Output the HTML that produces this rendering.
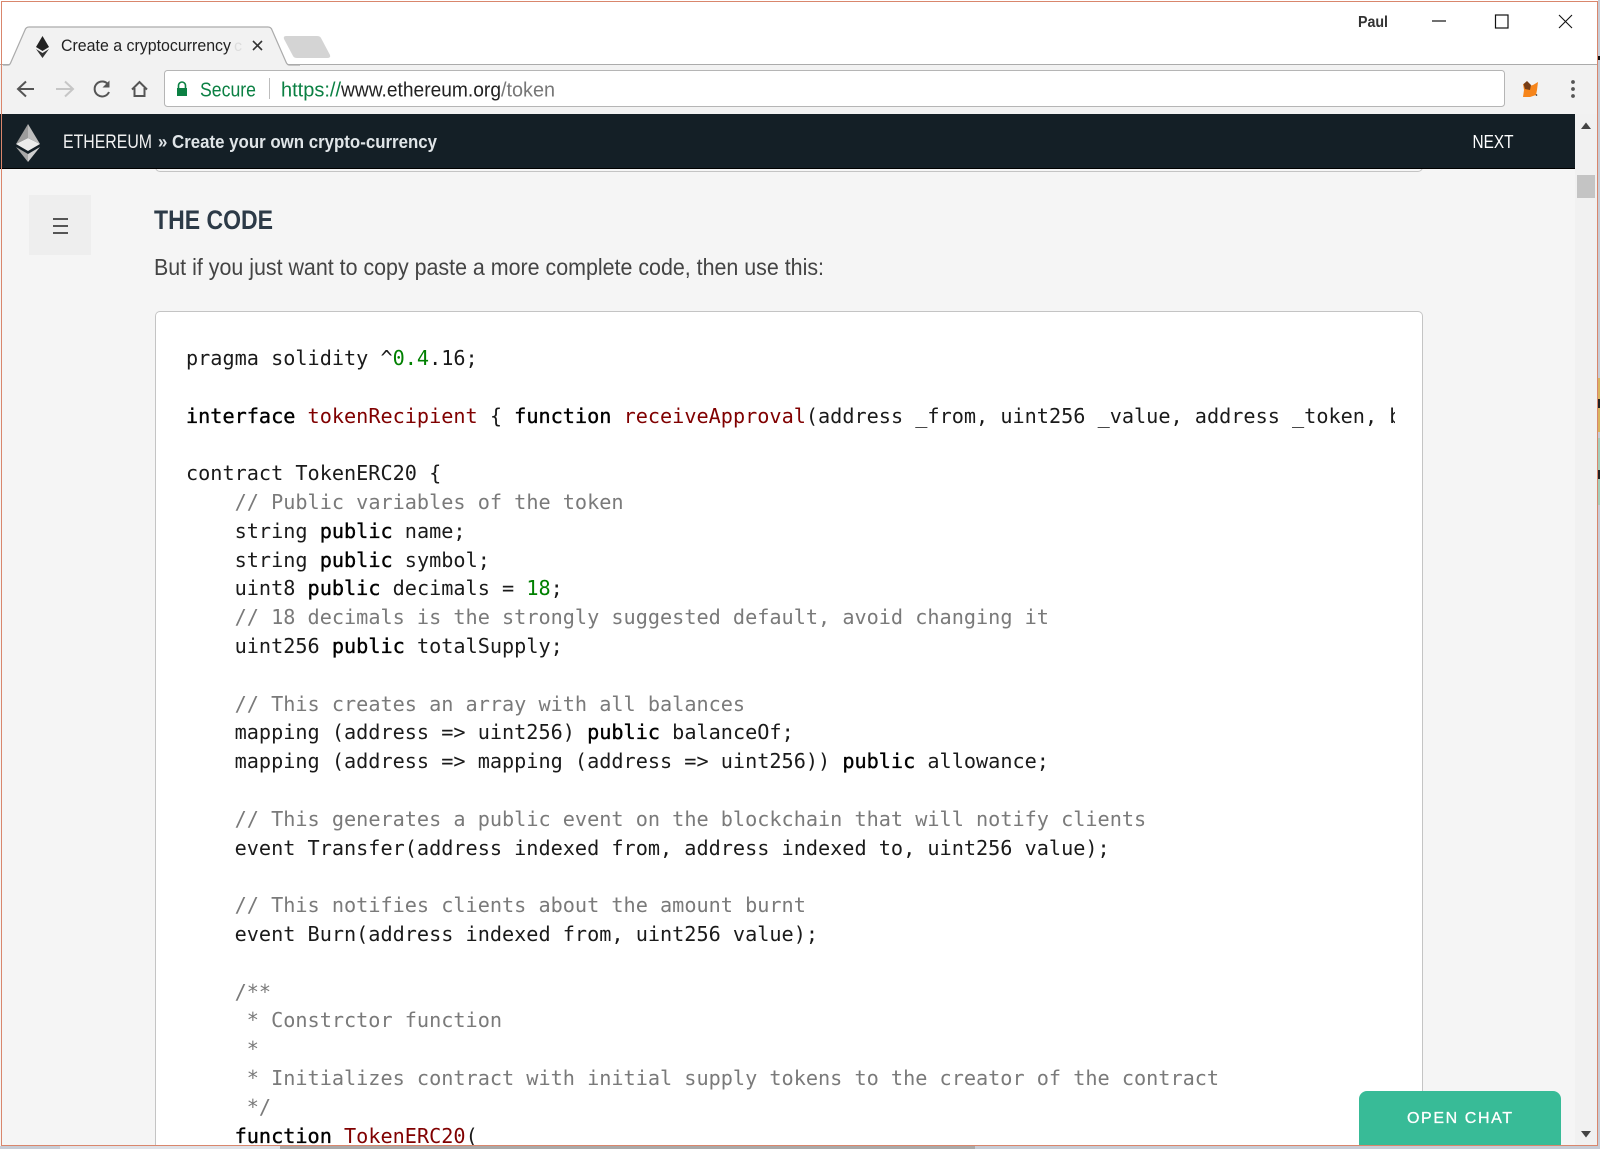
<!DOCTYPE html>
<html><head><meta charset="utf-8"><title>Create a cryptocurrency</title>
<style>
html,body{margin:0;padding:0;width:1600px;height:1149px;overflow:hidden;background:#c6ccd6}
*{box-sizing:border-box}
.a{position:absolute}
#win{position:absolute;left:0;top:0;width:1598px;height:1146px;background:#f5f5f5;overflow:hidden}
#frame{position:absolute;left:1px;top:1px;width:1597px;height:1145px;border:1.5px solid #d9866c;pointer-events:none}
svg{position:absolute;left:0;top:0;overflow:hidden}
pre{margin:0;font:20.21px/28.8px "DejaVu Sans Mono",monospace;color:#1a1a1a;position:absolute;left:0;top:0;white-space:pre}
.k{color:#000;-webkit-text-stroke:.35px #000}
.t{color:#800000}
.n{color:#008000}
.c{color:#7a7a7a}
</style></head><body>
<!-- surroundings -->
<div class="a" style="left:280px;top:1146px;width:695px;height:3px;background:#a9a9a9"></div>
<div class="a" style="left:60px;top:1146px;width:220px;height:3px;background:#dfe2e8"></div>
<div class="a" style="left:1598px;top:0;width:2px;height:1149px;background:#c6ccd6"></div>
<div class="a" style="left:1598px;top:378px;width:2px;height:54px;background:#d8b45e"></div>
<div class="a" style="left:1598px;top:438px;width:2px;height:67px;background:#a5cdb8"></div>
<div class="a" style="left:1598px;top:56px;width:2px;height:4px;background:#111"></div>
<div class="a" style="left:1598px;top:399px;width:2px;height:9px;background:#222"></div>
<div class="a" style="left:1598px;top:470px;width:2px;height:9px;background:#222"></div>
<div id="win">
<!-- chrome -->
<div class="a" style="left:0;top:0;width:1598px;height:65px;background:#fff"></div>
<div class="a" style="left:0;top:64px;width:1598px;height:50px;background:#f2f2f2;border-top:1px solid #ababab"></div>
<svg width="1600" height="180" viewBox="0 0 1600 180">
<path d="M3 65 H8 Q10 65 11 62 L25 30 Q26 27 29 27 H268 Q271 27 272 30 L286 62 Q287 65 290 65 H300" fill="#f2f2f2" stroke="#ababab" stroke-width="1.2"/>
<path d="M286 36 H317 Q320 36 321 38 L330 55 Q331 58 327 58 H297 Q294 58 293 56 L284 39 Q283 36 286 36Z" fill="#d4d4d4"/>
<!-- favicon -->
<path d="M42.500 36 L49 47 L42.500 51 L36 47Z" fill="#222"/><path d="M36 49 L42.500 53 L49 49 L42.500 58Z" fill="#333"/>
<text x="61" y="51" font-family="Liberation Sans" font-size="16.500" fill="#222" textLength="170" lengthAdjust="spacingAndGlyphs">Create a cryptocurrency</text>
<text x="234" y="51" font-family="Liberation Sans" font-size="16" fill="#ddd">c</text>
<path d="M253 41 L262 50 M262 41 L253 50" stroke="#333" stroke-width="1.6"/>
<!-- window -->
<text x="1358" y="27" font-family="Liberation Sans" font-size="15.500" font-weight="bold" fill="#333" textLength="30" lengthAdjust="spacingAndGlyphs">Paul</text>
<path d="M1432 21 H1446" stroke="#111" stroke-width="1.2"/>
<rect x="1495.500" y="15" width="12.500" height="13" fill="none" stroke="#111" stroke-width="1.2"/>
<path d="M1559 15 L1572 28 M1572 15 L1559 28" stroke="#111" stroke-width="1.1"/>
<!-- nav -->
<path d="M34 89 H19 M26 81.500 L18 89 L26 96.500" fill="none" stroke="#555" stroke-width="2"/>
<path d="M73 89 H56 M65 81.500 L73 89 L65 96.500" fill="none" stroke="#c6c6c6" stroke-width="2"/>
<path d="M108.500 85 A7.500 7.500 0 1 0 109 92" fill="none" stroke="#555" stroke-width="2"/><path d="M109.500 80.500 V87.500 H102.500Z" fill="#555"/>
<path d="M132 89.500 L139.500 82 L147 89.500 M134.500 88 V96 H144.500 V88" fill="none" stroke="#555" stroke-width="2"/>
<rect x="164.500" y="70.500" width="1340" height="36" rx="3" fill="#fff" stroke="#b5b5b5"/>
<path d="M178.500 88 V85.500 A3.500 3.500 0 0 1 185.500 85.500 V88" fill="none" stroke="#0b8043" stroke-width="1.600"/><rect x="177" y="88" width="10" height="8" fill="#0b8043"/>
<text x="200" y="96.500" font-family="Liberation Sans" font-size="20" fill="#0b8043" textLength="56" lengthAdjust="spacingAndGlyphs">Secure</text>
<path d="M269.500 78 V99" stroke="#bdbdbd"/>
<text x="281" y="96.500" font-family="Liberation Sans" font-size="20" fill="#0b8043" textLength="60" lengthAdjust="spacingAndGlyphs">https://</text>
<text x="341" y="96.500" font-family="Liberation Sans" font-size="20" fill="#222" textLength="160" lengthAdjust="spacingAndGlyphs">www.ethereum.org</text>
<text x="501" y="96.500" font-family="Liberation Sans" font-size="20" fill="#777" textLength="54" lengthAdjust="spacingAndGlyphs">/token</text>
<!-- fox -->
<path d="M1523 84 L1529 86 L1533 85 L1538 82 L1537 90 L1536 95 L1530 97 L1523 97 L1524 90Z" fill="#f6851b"/>
<path d="M1523.500 84 L1527 81 L1531 85 L1530 90 L1525 89Z" fill="#763d16"/>
<circle cx="1536.500" cy="95" r=".8" fill="#222"/>
<circle cx="1573" cy="82" r="1.900" fill="#555"/><circle cx="1573" cy="89" r="1.900" fill="#555"/><circle cx="1573" cy="96" r="1.900" fill="#555"/>
</svg>
<!-- scrollbar -->
<div class="a" style="left:1575px;top:114px;width:22px;height:1032px;background:#f1f1f1"></div>
<div class="a" style="left:1577px;top:175px;width:18px;height:23px;background:#c4c4c4"></div>
<svg width="1600" height="1149" viewBox="0 0 1600 1149">
<path d="M1581 129 L1586 122.500 L1591 129Z" fill="#444"/>
<path d="M1581 1131 L1591 1131 L1586 1137.500Z" fill="#444"/>
</svg>
<!-- previous box bottom -->
<div class="a" style="left:155px;top:160px;width:1268px;height:12px;background:#f5f5f5;border:1.5px solid #c4c4c4;border-top:0;border-radius:0 0 5px 5px"></div>
<!-- header -->
<div class="a" style="left:0;top:114px;width:1575px;height:55px;background:#141f26;border-bottom:1px solid #000"></div>
<svg width="1600" height="180" viewBox="0 0 1600 180">
<path d="M28 124 L16 144 L28 138Z" fill="#9c9c9c"/><path d="M28 124 L40 144 L28 138Z" fill="#bdbdbd"/><path d="M16 144 L28 138 L40 144 L28 151Z" fill="#ececec"/>
<path d="M16 147 L28 154 L28 162Z" fill="#a8a8a8"/><path d="M40 147 L28 154 L28 162Z" fill="#cfcfcf"/>
<text x="63" y="148" font-family="Liberation Sans" font-size="19.500" fill="#f0f0f0" textLength="89" lengthAdjust="spacingAndGlyphs">ETHEREUM</text>
<text x="158" y="148" font-family="Liberation Sans" font-size="18.500" font-weight="bold" fill="#e0e5e8" textLength="279" lengthAdjust="spacingAndGlyphs">» Create your own crypto-currency</text>
<text x="1472.500" y="148" font-family="Liberation Sans" font-size="18.500" fill="#fff" textLength="41" lengthAdjust="spacingAndGlyphs">NEXT</text>
</svg>
<!-- sidebar -->
<div class="a" style="left:29px;top:195px;width:62px;height:60px;background:#eeeeee"></div>
<div class="a" style="left:52.500px;top:218px;width:15px;height:2px;background:#555"></div>
<div class="a" style="left:52.500px;top:225px;width:15px;height:2px;background:#555"></div>
<div class="a" style="left:52.500px;top:232px;width:15px;height:2px;background:#555"></div>
<!-- text -->
<svg width="1600" height="300" viewBox="0 0 1600 300">
<text x="154" y="229" font-family="Liberation Sans" font-size="27" font-weight="bold" fill="#2c3a47" textLength="119" lengthAdjust="spacingAndGlyphs">THE CODE</text>
<text x="154" y="275" font-family="Liberation Sans" font-size="23.500" fill="#444" textLength="670" lengthAdjust="spacingAndGlyphs">But if you just want to copy paste a more complete code, then use this:</text>
</svg>
<!-- code -->
<div class="a" style="left:155px;top:311px;width:1268px;height:835px;background:#fff;border:1.5px solid #c4c4c4;border-bottom:0;border-radius:5px 5px 0 0"></div>
<div class="a" style="left:186px;top:344px;width:1209px;height:802px;overflow:hidden"><pre>pragma solidity ^<span class="n">0.4</span>.16;

<span class="k">interface</span> <span class="t">tokenRecipient</span> { <span class="k">function</span> <span class="t">receiveApproval</span>(address _from, uint256 _value, address _token, bytes _extraData) external; }

contract TokenERC20 {
    <span class="c">// Public variables of the token</span>
    string <span class="k">public</span> name;
    string <span class="k">public</span> symbol;
    uint8 <span class="k">public</span> decimals = <span class="n">18</span>;
    <span class="c">// 18 decimals is the strongly suggested default, avoid changing it</span>
    uint256 <span class="k">public</span> totalSupply;

    <span class="c">// This creates an array with all balances</span>
    mapping (address =&gt; uint256) <span class="k">public</span> balanceOf;
    mapping (address =&gt; mapping (address =&gt; uint256)) <span class="k">public</span> allowance;

    <span class="c">// This generates a public event on the blockchain that will notify clients</span>
    event Transfer(address indexed from, address indexed to, uint256 value);

    <span class="c">// This notifies clients about the amount burnt</span>
    event Burn(address indexed from, uint256 value);

    <span class="c">/**
     * Constrctor function
     *
     * Initializes contract with initial supply tokens to the creator of the contract
     */</span>
    <span class="k">function</span> <span class="t">TokenERC20</span>(</pre></div>
<!-- chat -->
<div class="a" style="left:1359px;top:1091px;width:202px;height:55px;background:#38bb97;border-radius:8px 8px 0 0"></div>
<svg width="1600" height="1149" viewBox="0 0 1600 1149">
<text x="1407" y="1123" font-family="Liberation Sans" font-size="16" fill="#fff" textLength="105" lengthAdjust="spacing" stroke="#fff" stroke-width=".3">OPEN CHAT</text>
</svg>
</div>
<div id="frame"></div>
</body></html>
